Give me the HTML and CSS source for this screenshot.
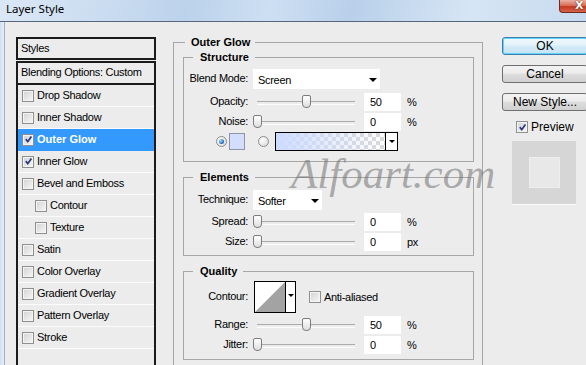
FILE: index.html
```html
<!DOCTYPE html>
<html>
<head>
<meta charset="utf-8">
<title>Layer Style</title>
<link rel="stylesheet" href="styles.css">
</head>
<body>
<div class="titlebar">
  <span class="title">Layer Style</span>
  <div class="close">X</div>
</div>
<div class="frame">
  <div class="frame-edge"></div>
  <div class="dialog">
    <div class="styles-col">
      <div class="styles-head">Styles</div>
      <div class="styles-list">
        <div class="blend-row">Blending Options: Custom</div>
        <div class="item"><span class="cb"></span>Drop Shadow</div>
        <div class="item"><span class="cb"></span>Inner Shadow</div>
        <div class="item sel"><span class="cb checked"><svg viewBox="0 0 10 10"><path d="M2 4.6 L4.2 7.4 L8.2 1.8"/></svg></span>Outer Glow</div>
        <div class="item"><span class="cb checked"><svg viewBox="0 0 10 10"><path d="M2 4.6 L4.2 7.4 L8.2 1.8"/></svg></span>Inner Glow</div>
        <div class="item"><span class="cb"></span>Bevel and Emboss</div>
        <div class="item sub"><span class="cb"></span>Contour</div>
        <div class="item sub"><span class="cb"></span>Texture</div>
        <div class="item"><span class="cb"></span>Satin</div>
        <div class="item"><span class="cb"></span>Color Overlay</div>
        <div class="item"><span class="cb"></span>Gradient Overlay</div>
        <div class="item"><span class="cb"></span>Pattern Overlay</div>
        <div class="item"><span class="cb"></span>Stroke</div>
      </div>
    </div>

    <div class="main-col">
      <fieldset class="group outer">
        <legend class="legend-outer">Outer Glow</legend>

        <fieldset class="group sub-group structure">
          <legend class="legend-sub">Structure</legend>
          <div class="row row-select">
            <span class="lbl">Blend Mode:</span>
            <div class="select select-wide"><span>Screen</span><span class="arrow"></span></div>
          </div>
          <div class="row">
            <span class="lbl">Opacity:</span>
            <div class="slider"><span class="thumb thumb-50"></span></div>
            <div class="num">50</div><span class="unit">%</span>
          </div>
          <div class="row">
            <span class="lbl">Noise:</span>
            <div class="slider"><span class="thumb thumb-0"></span></div>
            <div class="num">0</div><span class="unit">%</span>
          </div>
          <div class="row row-color">
            <span class="radio on"></span>
            <span class="swatch"></span>
            <span class="radio radio-2"></span>
            <div class="gradbox"><div class="grad-fill"></div><div class="grad-drop"><span class="arrow small"></span></div></div>
          </div>
        </fieldset>

        <fieldset class="group sub-group elements">
          <legend class="legend-sub">Elements</legend>
          <div class="row row-select row-tech">
            <span class="lbl">Technique:</span>
            <div class="select select-narrow"><span>Softer</span><span class="arrow"></span></div>
          </div>
          <div class="row">
            <span class="lbl">Spread:</span>
            <div class="slider"><span class="thumb thumb-0"></span></div>
            <div class="num">0</div><span class="unit">%</span>
          </div>
          <div class="row">
            <span class="lbl">Size:</span>
            <div class="slider"><span class="thumb thumb-0"></span></div>
            <div class="num">0</div><span class="unit">px</span>
          </div>
        </fieldset>

        <fieldset class="group sub-group quality">
          <legend class="legend-sub">Quality</legend>
          <div class="row row-contour">
            <span class="lbl">Contour:</span>
            <div class="contour">
              <div class="contour-img"><svg viewBox="0 0 30 30" preserveAspectRatio="none"><polygon points="0,30 30,0 30,30"/></svg></div>
              <div class="contour-drop"><span class="arrow small"></span></div>
            </div>
            <span class="cb aa-cb"></span><span class="aa-text">Anti-aliased</span>
          </div>
          <div class="row">
            <span class="lbl">Range:</span>
            <div class="slider"><span class="thumb thumb-50"></span></div>
            <div class="num">50</div><span class="unit">%</span>
          </div>
          <div class="row">
            <span class="lbl">Jitter:</span>
            <div class="slider"><span class="thumb thumb-0"></span></div>
            <div class="num">0</div><span class="unit">%</span>
          </div>
        </fieldset>
      </fieldset>
    </div>

    <div class="right-col">
      <div class="btn default">OK</div>
      <div class="btn">Cancel</div>
      <div class="btn btn-last">New Style...</div>
      <div class="preview-row"><span class="cb checked"><svg viewBox="0 0 10 10"><path d="M2 4.6 L4.2 7.4 L8.2 1.8"/></svg></span>Preview</div>
      <div class="preview-box"><div class="preview-inner"></div></div>
    </div>
  </div>
</div>
<div class="watermark">Alfoart.com</div>
</body>
</html>
```

FILE: styles.css
```css
* { box-sizing: border-box; }

html, body {
  margin: 0;
  padding: 0;
}

body {
  width: 586px;
  height: 365px;
  overflow: hidden;
  background: #ececec;
  font-family: "Liberation Sans", Arial, sans-serif;
  font-size: 11px;
  letter-spacing: -0.3px;
  color: #000;
  position: relative;
}

/* ---------- title bar ---------- */
.titlebar {
  height: 22px;
  display: flex;
  align-items: flex-start;
  background: linear-gradient(100deg, #dbe7f5 0%, #cadcf0 18%, #bcd2eb 32%, #cddff2 46%, #b9d0ea 60%, #d6e5f4 80%, #c7daef 100%);
  border-bottom: 1px solid #56677b;
}

.title {
  font-family: "Noto Sans", sans-serif;
  font-size: 11.5px;
  letter-spacing: 0;
  line-height: 14px;
  margin: 2px 0 0 6px;
}

.close {
  margin-left: auto;
  margin-right: -18px;
  width: 45px;
  height: 13px;
  border: 1px solid #6b2a22;
  border-top: none;
  border-radius: 0 0 0 4px;
  background: linear-gradient(#eab0a3 0%, #d9705b 45%, #c23a20 55%, #d6614a 100%);
  color: #fff;
  font-family: "DejaVu Sans", sans-serif;
  font-weight: bold;
  font-size: 11px;
  letter-spacing: 0;
  line-height: 12px;
  padding-left: 15px;
  text-shadow: 0 0 1px #5a1a10, 0 0 1px #5a1a10;
}

/* ---------- frame ---------- */
.frame {
  display: flex;
  height: 343px;
}

.frame-edge {
  width: 5px;
  flex-shrink: 0;
  background: linear-gradient(to right, #cddff2, #e8f0f9);
  border-right: 1px solid #a3adb8;
}

.dialog {
  flex: 1;
  display: flex;
  padding: 15px 0 0 11px;
  min-width: 0;
}

/* ---------- styles list ---------- */
.styles-col {
  width: 140px;
  flex-shrink: 0;
}

.styles-head {
  height: 23px;
  border: 2px solid #1b1b1b;
  padding-left: 3px;
  line-height: 18px;
  margin-bottom: 1px;
}

.styles-list {
  border: 2px solid #1b1b1b;
  border-bottom: none;
  height: 320px;
}

.blend-row {
  height: 22px;
  border-bottom: 2px solid #1b1b1b;
  padding-left: 3px;
  line-height: 18px;
}

.item {
  height: 22px;
  display: flex;
  align-items: center;
  padding-left: 4px;
  padding-bottom: 2px;
  border-bottom: 1px solid #fbfbfb;
}

.item.sub {
  padding-left: 17px;
}

.item.sel {
  background: #3399ff;
  color: #fff;
  font-weight: bold;
  letter-spacing: 0;
  border-bottom-color: #3399ff;
}

.cb {
  width: 12px;
  height: 12px;
  flex-shrink: 0;
  margin-right: 3px;
  border: 1px solid #8e8f8f;
  background: linear-gradient(135deg, #d2d2d2, #f7f7f7);
  box-shadow: inset 0 0 0 1px #f4f4f4;
  display: flex;
  align-items: center;
  justify-content: center;
}

.item .cb {
  margin-top: 2px;
}

.cb svg {
  width: 9px;
  height: 9px;
}

.cb svg path {
  fill: none;
  stroke: #27367e;
  stroke-width: 1.9;
}

/* ---------- main column ---------- */
.main-col {
  width: 310px;
  flex-shrink: 0;
  margin-left: 17px;
  margin-top: -2px;
}

.group {
  margin: 0;
  border: 1px solid #a6a6a6;
  min-width: 0;
}

.group legend {
  font-weight: bold;
  letter-spacing: 0;
  line-height: 14px;
}

.legend-outer {
  margin-left: 2px;
  padding: 0 5px 0 6px;
}

.legend-sub {
  margin-left: 9px;
  padding: 0 6px 0 7px;
}

.outer {
  padding: 1px 8px 0 9px;
  height: 360px;
}

.sub-group {
  padding: 0;
}

.structure {
  padding-bottom: 10px;
}

.elements {
  margin-top: 8px;
  padding-bottom: 3px;
}

.quality {
  margin-top: 8px;
  padding-bottom: 4px;
}

.row {
  display: flex;
  align-items: center;
  height: 20px;
}

.lbl {
  width: 64px;
  flex-shrink: 0;
  text-align: right;
  padding-bottom: 2px;
}

.row-select {
  margin-top: 5px;
  margin-bottom: 3px;
}

.row-tech {
  margin-top: 6px;
  margin-bottom: 2px;
}

.select {
  height: 20px;
  margin-left: 5px;
  background: #fff;
  display: flex;
  align-items: center;
  justify-content: space-between;
  padding: 1px 3px 0 5px;
}

.select-wide { width: 127px; }
.select-narrow { width: 69px; }

.arrow {
  width: 0;
  height: 0;
  border-left: 4px solid transparent;
  border-right: 4px solid transparent;
  border-top: 4px solid #000;
}

.arrow.small {
  border-left-width: 3px;
  border-right-width: 3px;
  border-top-width: 3px;
}

.slider {
  width: 98px;
  height: 20px;
  margin-left: 9px;
  position: relative;
}

.slider::before {
  content: "";
  position: absolute;
  left: 0;
  right: 0;
  top: 9px;
  height: 2px;
  border-top: 1px solid #ababab;
  border-bottom: 1px solid #fdfdfd;
}

.thumb {
  position: absolute;
  top: 3px;
  width: 9px;
  height: 13px;
  border: 1px solid #7c7c7c;
  border-radius: 2px 2px 4px 4px;
  background: linear-gradient(#ffffff, #dedede);
}

.thumb-0 { left: -4px; }
.thumb-50 { left: 45px; }

.num {
  width: 37px;
  height: 18px;
  margin-left: 9px;
  background: #fff;
  padding-left: 6px;
  line-height: 19px;
}

.unit {
  margin-left: 6px;
}

.row-color {
  height: 19px;
}

.radio {
  width: 11px;
  height: 11px;
  border-radius: 50%;
  border: 1px solid #8d8d8d;
  background: radial-gradient(circle at 35% 35%, #ffffff, #d4d4d4);
  margin-left: 32px;
  flex-shrink: 0;
  display: flex;
  align-items: center;
  justify-content: center;
}

.radio.on::after {
  content: "";
  width: 5px;
  height: 5px;
  border-radius: 50%;
  background: radial-gradient(circle at 35% 35%, #9fe0ff, #1c64b8 70%);
}

.radio-2 {
  margin-left: 13px;
}

.swatch {
  width: 16px;
  height: 17px;
  margin-left: 2px;
  border: 1px solid #8e95a6;
  background: #d2defb;
}

.gradbox {
  width: 123px;
  height: 19px;
  margin-left: 6px;
  border: 1px solid #000;
  display: flex;
}

.grad-fill {
  flex: 1;
  background-image:
    linear-gradient(to right, #cddbff, rgba(205, 219, 255, 0)),
    conic-gradient(#d9d9d9 25%, #ffffff 0 50%, #d9d9d9 0 75%, #ffffff 0);
  background-size: 100% 100%, 8px 8px;
}

.grad-drop {
  width: 12px;
  border-left: 1px solid #000;
  background: #fff;
  display: flex;
  align-items: center;
  justify-content: center;
}

.row-contour {
  height: 32px;
  margin-top: 3px;
  margin-bottom: 2px;
}

.contour {
  width: 42px;
  height: 32px;
  margin-left: 6px;
  border: 1px solid #000;
  display: flex;
  background: #fff;
}

.contour-img {
  width: 30px;
  height: 30px;
}

.contour-img svg {
  display: block;
  width: 30px;
  height: 30px;
}

.contour-img polygon {
  fill: #a3a3a3;
}

.contour-drop {
  flex: 1;
  border-left: 1px solid #000;
  display: flex;
  align-items: center;
  justify-content: center;
  padding-bottom: 4px;
}

.aa-cb {
  margin-left: 13px;
  margin-right: 3px;
}

/* ---------- right column ---------- */
.right-col {
  width: 86px;
  flex-shrink: 0;
  margin-left: 19px;
  display: flex;
  flex-direction: column;
}

.btn {
  height: 18px;
  margin-bottom: 10px;
  border: 1px solid #707070;
  border-radius: 3px;
  background: linear-gradient(#f3f3f3 0%, #ececec 45%, #dedede 50%, #d0d0d0 100%);
  font-size: 12px;
  letter-spacing: 0;
  line-height: 16px;
  text-align: center;
}

.btn.default {
  border-color: #3c7fb1;
  box-shadow: inset 0 0 0 1px #62d3f4;
  background: linear-gradient(#eef7fc 0%, #e4f2fa 45%, #d5ebf8 50%, #c6e3f4 100%);
}

.btn.btn-last {
  margin-bottom: 0;
}

.preview-row {
  display: flex;
  align-items: center;
  height: 14px;
  margin-top: 9px;
  padding-left: 14px;
  font-size: 12px;
  letter-spacing: 0;
}

.preview-box {
  width: 64px;
  height: 64px;
  margin: 7px 0 0 10px;
  background: #d6d6d6;
  border-bottom: 1px solid #fafafa;
  padding: 16px 0 0 17px;
}

.preview-inner {
  width: 31px;
  height: 31px;
  background: #e8e8e8;
  border: 1px solid #ededed;
}

/* ---------- watermark ---------- */
.watermark {
  position: absolute;
  left: 291px;
  top: 152px;
  font-family: "Liberation Serif", serif;
  font-style: italic;
  font-size: 43px;
  line-height: 43px;
  letter-spacing: 0;
  color: rgba(110, 110, 110, 0.55);
  pointer-events: none;
}
```
